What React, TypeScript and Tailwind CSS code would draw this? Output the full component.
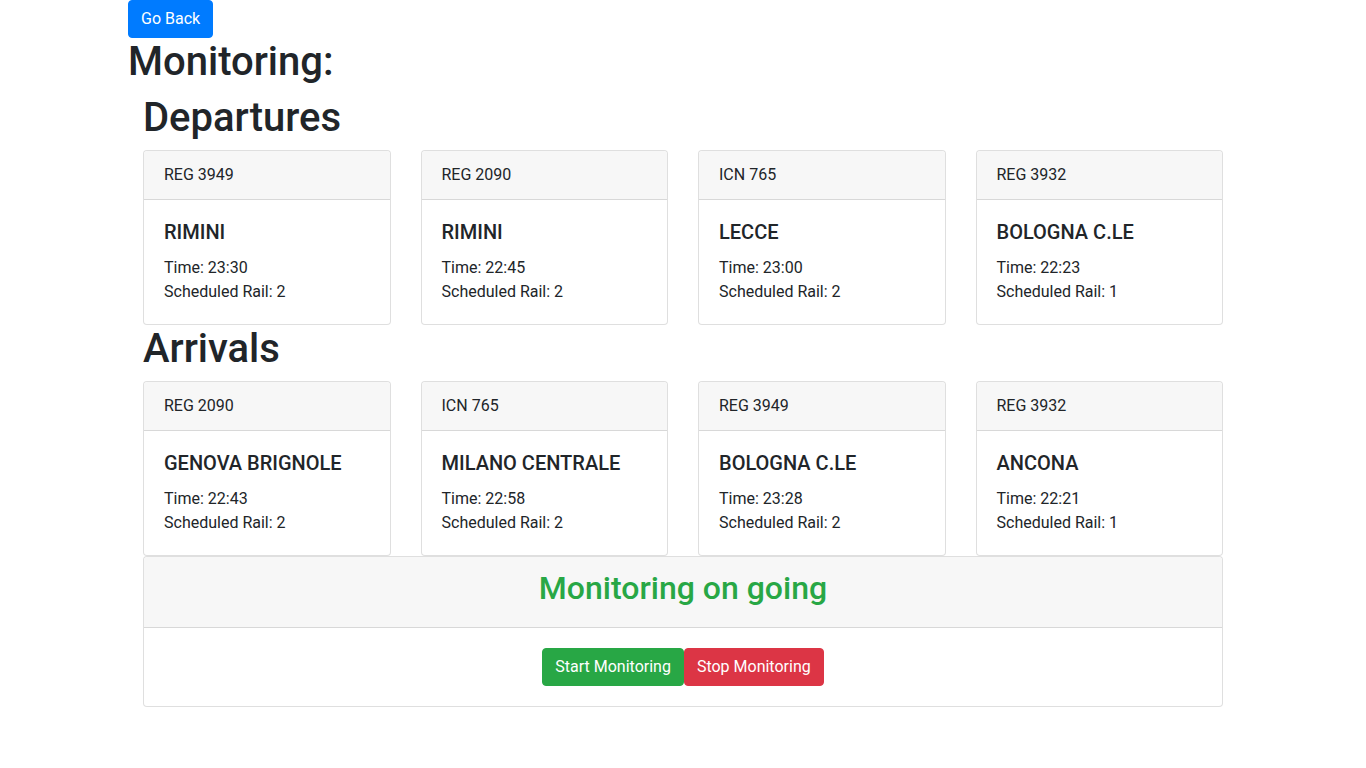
const departures = [
  { id: 'REG 3949', dest: 'RIMINI', time: '23:30', rail: 2 },
  { id: 'REG 2090', dest: 'RIMINI', time: '22:45', rail: 2 },
  { id: 'ICN 765', dest: 'LECCE', time: '23:00', rail: 2 },
  { id: 'REG 3932', dest: 'BOLOGNA C.LE', time: '22:23', rail: 1 },
];

const arrivals = [
  { id: 'REG 2090', dest: 'GENOVA BRIGNOLE', time: '22:43', rail: 2 },
  { id: 'ICN 765', dest: 'MILANO CENTRALE', time: '22:58', rail: 2 },
  { id: 'REG 3949', dest: 'BOLOGNA C.LE', time: '23:28', rail: 2 },
  { id: 'REG 3932', dest: 'ANCONA', time: '22:21', rail: 1 },
];

type Train = { id: string; dest: string; time: string; rail: number };

function TrainCard({ t }: { t: Train }) {
  return (
    <div className="rounded border border-black/[0.125] bg-white">
      <div className="px-5 py-3 bg-[#f7f7f7] border-b border-black/[0.125] rounded-t leading-6">{t.id}</div>
      <div className="p-5">
        <h5 className="text-[20px] font-medium leading-6 mb-3">{t.dest}</h5>
        <p className="leading-6">Time: {t.time}</p>
        <p className="leading-6">Scheduled Rail: {t.rail}</p>
      </div>
    </div>
  );
}

function Section({ title, trains }: { title: string; trains: Train[] }) {
  return (
    <>
      <h1 className="text-[40px] font-medium leading-[48px] mb-2">{title}</h1>
      <div className="grid grid-cols-4 gap-x-[30px]">
        {trains.map((t, i) => (
          <TrainCard key={i} t={t} />
        ))}
      </div>
    </>
  );
}

export default function App() {
  return (
    <div className="min-h-screen bg-white text-[#212529] font-['Roboto',sans-serif] text-base">
      <div className="w-[1140px] mx-auto px-[15px]">
        <button className="bg-[#007bff] text-white px-3 py-1.5 border border-[#007bff] rounded leading-6">Go Back</button>
        <h1 className="text-[40px] font-medium leading-[48px] mb-2">Monitoring:</h1>
        <div className="px-[15px]">
          <Section title="Departures" trains={departures} />
          <Section title="Arrivals" trains={arrivals} />
          <div className="rounded border border-black/[0.125] bg-white">
            <div className="px-5 py-3 bg-[#f7f7f7] border-b border-black/[0.125] rounded-t text-center">
              <h2 className="text-[32px] font-medium leading-[38.4px] mb-2 text-[#28a745]">Monitoring on going</h2>
            </div>
            <div className="p-5 flex justify-center">
              <button className="bg-[#28a745] text-white px-3 py-1.5 border border-[#28a745] rounded leading-6">Start Monitoring</button>
              <button className="bg-[#dc3545] text-white px-3 py-1.5 border border-[#dc3545] rounded leading-6">Stop Monitoring</button>
            </div>
          </div>
        </div>
      </div>
    </div>
  );
}
